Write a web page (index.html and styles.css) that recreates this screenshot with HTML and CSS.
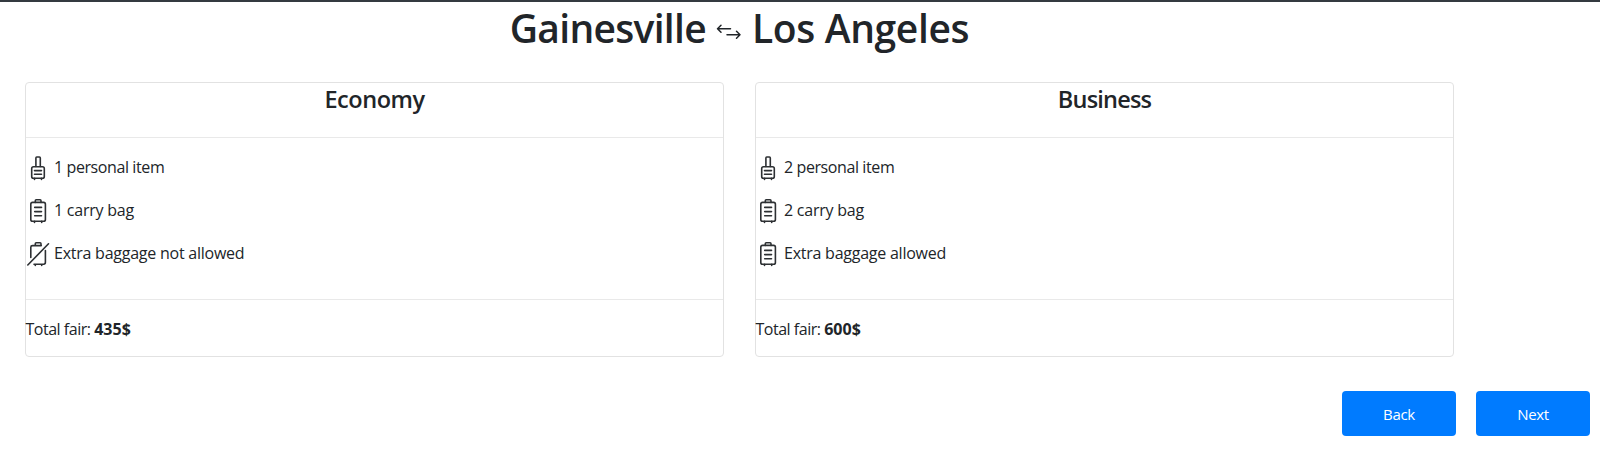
FILE: index.html
```
<!DOCTYPE html>
<html lang="en">
<head>
<meta charset="utf-8">
<title>Choose fare</title>
<link rel="stylesheet" href="styles.css">
</head>
<body>
<svg class="sprite" aria-hidden="true">
  <symbol id="personal" viewBox="0 0 24 28">
    <path d="M9.9 12.5V3.9q0-.9.9-.9h2.6q.9 0 .9.9v8.6"/>
    <rect x="5.7" y="12.8" width="12.6" height="11.4" rx="1.8"/>
    <path d="M8.5 16.6h7M8.5 20.2h7M8.5 24.2v1.3M15.5 24.2v1.3"/>
  </symbol>
  <symbol id="carry" viewBox="0 0 24 28">
    <path d="M9.3 5.4V3.7q0-.9.9-.9h3.9q.9 0 .9.9v1.7"/>
    <rect x="4.8" y="5.4" width="14.6" height="18.8" rx="1.8"/>
    <path d="M8.7 10.4h6.8M8.7 14.6h6.8M8.7 18.7h6.8M8.5 24.2v1.3M15.7 24.2v1.3"/>
  </symbol>
  <symbol id="nobag" viewBox="0 0 24 28">
    <path d="M9.3 5.6V3.7q0-.9.9-.9h3.9q.9 0 .9.9v1.9zM4.8 17.5V7.2q0-1.6 1.7-1.6h8.8M19.4 10.5v11.8q0 1.9-1.7 1.9H8M9.3 24.2v1.3M15.7 24.2v1.3M1.8 25L22.5 3.8"/>
  </symbol>
</svg>
<main class="page">
  <h1 class="route">
    <span class="from">Gainesville</span>
    <svg class="arrows" viewBox="0 0 26 16"><path d="M14.5 4.8H1.5M5 1.3L1.5 4.8L5 8.3M11 10.7h13M20.5 7.2l3.5 3.5l-3.5 3.5"/></svg>
    <span class="to">Los Angeles</span>
  </h1>
  <div class="fares">
    <section class="card">
      <h2 class="card-title">Economy</h2>
      <ul class="features">
        <li><svg class="icon"><use href="#personal"/></svg><span class="items">1 personal item</span></li>
        <li><svg class="icon"><use href="#carry"/></svg><span>1 carry bag</span></li>
        <li><svg class="icon"><use href="#nobag"/></svg><span>Extra baggage not allowed</span></li>
      </ul>
      <p class="total">Total fair: <b>435$</b></p>
    </section>
    <section class="card">
      <h2 class="card-title business">Business</h2>
      <ul class="features">
        <li><svg class="icon"><use href="#personal"/></svg><span class="items">2 personal item</span></li>
        <li><svg class="icon"><use href="#carry"/></svg><span>2 carry bag</span></li>
        <li><svg class="icon"><use href="#carry"/></svg><span>Extra baggage allowed</span></li>
      </ul>
      <p class="total">Total fair: <b>600$</b></p>
    </section>
  </div>
  <div class="actions">
    <button class="btn">Back</button>
    <button class="btn">Next</button>
  </div>
</main>
</body>
</html>
```
FILE: styles.css
```
* { box-sizing: border-box; }
body { margin: 0; background: #fff; color: #212529; font: 16px/24px "Open Sans", "Noto Sans", sans-serif; letter-spacing: -0.24px; }
.sprite { display: none; }
.page { height: 469px; border-top: 2px solid #343a40; overflow: hidden; }
.route { display: flex; justify-content: center; align-items: center; width: 1479px; height: 52px; margin: 0; font-size: 39px; font-weight: 600; line-height: 52px; letter-spacing: -0.7px; }
.to { letter-spacing: -0.35px; }
.arrows { width: 26px; height: 16px; margin: 8px 10px 0 10px; }
.arrows path { fill: none; stroke: #212529; stroke-width: 1.5; stroke-linecap: round; stroke-linejoin: round; }
.fares { display: flex; gap: 31px; margin: 28px 0 0 25px; }
.card { width: 699px; height: 275px; border: 1px solid #e2e2e2; border-radius: 4px; }
.card-title { height: 55px; margin: 0; border-bottom: 1px solid #e9e9e9; text-align: center; font-size: 23.5px; line-height: 33px; font-weight: 600; letter-spacing: -0.45px; }
.business { letter-spacing: -0.8px; }
.features { list-style: none; margin: 0; padding: 8px 0 0; height: 162px; border-bottom: 1px solid #e9e9e9; }
.features li { display: flex; align-items: center; height: 43px; }
.features span { margin-top: -1px; }
.items { letter-spacing: -0.4px; }
.icon { width: 24px; height: 28px; margin-right: 4px; fill: none; stroke: #2d3033; stroke-width: 1.6; stroke-linecap: round; stroke-linejoin: round; }
.total { margin: 17px 0 0 -0.5px; letter-spacing: -0.48px; }
.total b { font-weight: 700; letter-spacing: 0; }
.actions { display: flex; justify-content: flex-end; gap: 20px; padding: 34px 10px 0 0; }
.btn { width: 114px; height: 45px; padding: 0; border: 0; border-radius: 4px; background: #007bff; color: #fff; font: 15px/24px "Open Sans", sans-serif; letter-spacing: -0.3px; }
```
